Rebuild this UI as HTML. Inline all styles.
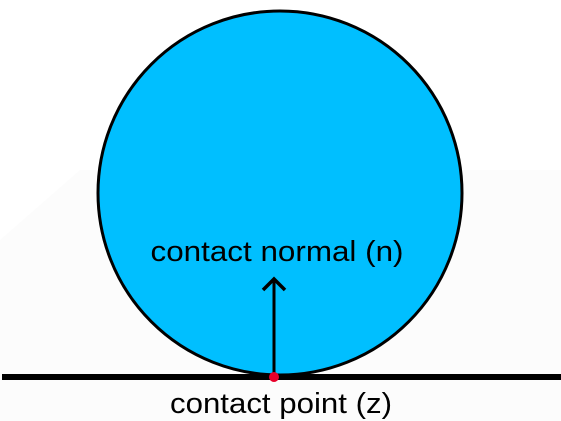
<!DOCTYPE html>
<html><head><style>body{margin:0;background:#fff}svg{display:block}</style></head><body>
<svg width="561" height="421" xmlns="http://www.w3.org/2000/svg">
<rect width="561" height="421" fill="#fff"/>
<path d="M0 240 L80 170 L561 170 L561 421 L0 421Z" fill="#fcfcfc"/>
<circle cx="280" cy="193" r="182" fill="#00bfff" stroke="#000" stroke-width="3"/>
<line x1="2" y1="377" x2="561" y2="377" stroke="#000" stroke-width="6"/>
<line x1="274" y1="375" x2="274" y2="280" stroke="#000" stroke-width="3"/>
<polyline points="263,290 274,279 285,290" fill="none" stroke="#000" stroke-width="3.5"/>
<circle cx="274" cy="377" r="5" fill="#e8002a"/>
<text x="277" y="261" font-family="Liberation Sans, sans-serif" font-size="29" text-anchor="middle" textLength="253" lengthAdjust="spacingAndGlyphs" fill="#000">contact normal (n)</text>
<text x="281" y="413" font-family="Liberation Sans, sans-serif" font-size="29" text-anchor="middle" textLength="222" lengthAdjust="spacingAndGlyphs" fill="#000">contact point (z)</text>
</svg>
</body></html>
